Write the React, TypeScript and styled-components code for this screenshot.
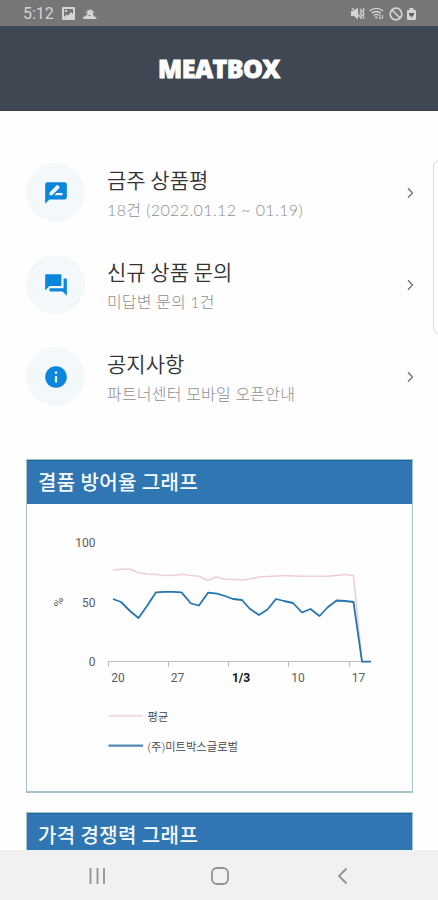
import React from 'react';
import styled, { createGlobalStyle } from 'styled-components';
import { MdInfo, MdQuestionAnswer, MdRateReview } from 'react-icons/md';

const GlobalStyle = createGlobalStyle`
  * { box-sizing: border-box; }
  html, body { margin: 0; padding: 0; background: #fff; }
  body { overflow: hidden; }
`;

const Screen = styled.div`
  position: relative;
  display: flex;
  flex-direction: column;
  width: 438px;
  height: 900px;
  overflow: hidden;
  background: #fefefe;
  font-family: Lato, 'Noto Sans CJK KR', sans-serif;
`;

const StatusBar = styled.header`
  flex: none;
  display: flex;
  align-items: center;
  justify-content: space-between;
  height: 26px;
  padding: 1px 22px 0 23px;
  background: #767676;
  color: #d4d4d4;
`;

const StatusGroup = styled.div<{ $gap: number }>`
  display: flex;
  align-items: center;
  gap: ${(p) => p.$gap}px;
`;

const Clock = styled.span`
  width: 31px;
  padding-top: 1px;
  font: 400 16px/20px Roboto, sans-serif;
  white-space: nowrap;
`;

const Brand = styled.div`
  flex: none;
  display: flex;
  align-items: center;
  justify-content: center;
  height: 85px;
  padding-bottom: 1px;
  border-bottom: 1px solid #37404a;
  background: #3f4852;
  color: #fff;
  font: 800 25px/30px 'Open Sans', sans-serif;
  letter-spacing: -0.55px;
  -webkit-text-stroke: 0.8px #fff;
`;

const Content = styled.main`
  flex: 1;
  min-height: 0;
  overflow: hidden;
  padding: 52px 25px 0 26px;
`;

const Menu = styled.nav`
  display: flex;
  flex-direction: column;
  gap: 33px;
`;

const MenuRow = styled.a`
  display: flex;
  align-items: center;
  height: 59px;
`;

const IconDisc = styled.span`
  flex: none;
  display: flex;
  align-items: center;
  justify-content: center;
  width: 59px;
  height: 59px;
  border-radius: 50%;
  background: #f3f8fb;
  color: #0a86dc;
  font-size: 26px;
`;

const MenuText = styled.span`
  flex: 1;
  display: flex;
  flex-direction: column;
  padding: 4px 0 0 22px;
`;

const MenuTitle = styled.span`
  font: 350 21px/30px 'Noto Sans CJK KR', sans-serif;
  color: #333;
  white-space: nowrap;
`;

const MenuNote = styled.span<{ $spacing: number }>`
  font: 300 16px/31px Lato, 'Noto Sans CJK KR', sans-serif;
  letter-spacing: ${(p) => p.$spacing}px;
  color: #8f8f8f;
  white-space: nowrap;
`;

const ArrowBox = styled.span`
  display: flex;
  width: 7px;
  height: 12px;
`;

const Card = styled.section<{ $top: number }>`
  margin-top: ${(p) => p.$top}px;
  border: 1px solid #a6c2cb;
  border-width: 1px 1.5px 2px;
  height: 334px;
`;

const CardTitle = styled.h2`
  height: 44px;
  margin: 0;
  padding-left: 11px;
  border-top: 1px solid #1767a3;
  background: #3076b2;
  color: #f5faff;
  font: 500 20px/41px 'Noto Sans CJK KR', sans-serif;
  letter-spacing: 0.4px;
`;

const NavBar = styled.footer`
  flex: none;
  display: flex;
  justify-content: space-between;
  align-items: center;
  height: 50px;
  padding: 1px 90px 0 88px;
  background: #f1f1f1;
`;

const EdgeHandle = styled.div`
  position: absolute;
  top: 160px;
  right: -8px;
  width: 13px;
  height: 174px;
  border: 1px solid #dadada;
  border-radius: 7px;
  background: #fff;
`;

const AxisText = styled.text<{ $bold?: boolean }>`
  font: ${(p) => (p.$bold ? 700 : 400)} 12px Roboto, sans-serif;
  fill: ${(p) => (p.$bold ? '#111' : '#5c5c5c')};
`;

const LegendText = styled.text`
  font: 350 11.3px Roboto, 'Noto Sans CJK KR', sans-serif;
  fill: #444;
`;

const rows = [
  { icon: <MdRateReview />, title: '금주 상품평', note: '18건 (2022.01.12 ~ 01.19)', spacing: 0.4 },
  { icon: <MdQuestionAnswer />, title: '신규 상품 문의', note: '미답변 문의 1건', spacing: 0.15 },
  { icon: <MdInfo />, title: '공지사항', note: '파트너센터 모바일 오픈안내', spacing: 0.2 },
];

const own =
  '113,599 121,602 130,611 138.5,618 147,606 156,592.3 164,591.8 173,591.8 181.5,592.3 191,603.5 199,605.5 208,592.7 217,593.7 225,596 233,599 242,600 250,609 259,615 267.5,609.5 276,599 284,601 293,603 302,612.5 310.5,609 319.5,616 328,607 336.5,600.5 345,601 353.5,602 362,661.7 371,661.7';
const average =
  '113,570 121,569.2 130,569.2 138,572.5 146,574 156,574.5 164,575.5 173,575.5 182,574.2 190,575.5 199,576.3 208,580.5 216,577 224,579 242,580 250,579 259,577 276,576 285,575.5 300,576.3 328,576.3 345,574.5 353.5,575.5 362,661';

const ticks = [108.5, 168.5, 228.5, 288.5, 349.5];
const xLabels = [
  { x: 118, text: '20' },
  { x: 177.5, text: '27' },
  { x: 241, text: '1/3', bold: true },
  { x: 298, text: '10' },
  { x: 358.5, text: '17' },
];

function Chart() {
  return (
    <svg width="384" height="287" viewBox="27 504 384 287" display="block">
      {[['100', 547], ['50', 606.5], ['0', 666]].map(([t, y]) => (
        <AxisText key={t} x="95.5" y={y} textAnchor="end">{t}</AxisText>
      ))}
      <AxisText x="59" y="606" textAnchor="middle" transform="rotate(-90 59 602)">%</AxisText>
      <path d={`M108 661.5H371 ${ticks.map((x) => `M${x} 662v5`).join(' ')}`} stroke="#bcbcbc" fill="none" />
      <polyline points={average} fill="none" stroke="#efcfd6" strokeWidth="1.6" strokeLinejoin="round" />
      <polyline points={own} fill="none" stroke="#2376b0" strokeWidth="1.8" strokeLinejoin="round" />
      {xLabels.map((l) => (
        <AxisText key={l.text} x={l.x} y="682" textAnchor="middle" $bold={l.bold}>{l.text}</AxisText>
      ))}
      <path d="M108.500 715.7H143" stroke="#f0dce1" strokeWidth="2" />
      <path d="M108.500 745.7H143" stroke="#5288b7" strokeWidth="2.2" />
      <LegendText x="147.5" y="720.5">평균</LegendText>
      <LegendText x="147.5" y="750.5">(주)미트박스글로벌</LegendText>
    </svg>
  );
}

export default function App() {
  return (
    <>
      <GlobalStyle />
      <Screen>
        <StatusBar>
          <StatusGroup $gap={8}>
            <Clock>5:12</Clock>
            <svg width="13" height="13" viewBox="0 0 13 13">
              <path fill="currentColor" fillRule="evenodd" d="M1 0h11a1 1 0 0 1 1 1v11a1 1 0 0 1-1 1H1a1 1 0 0 1-1-1V1a1 1 0 0 1 1-1zm1 2v8l2.500-2.500 1.500 1L9 5l2 2V2zM3 3h2v2H3z" />
            </svg>
            <svg width="14" height="12" viewBox="0 0 14 12">
              <path fill="currentColor" d="M4 5a3 3 0 0 1 6.200 0l-.5 2H4.500zM0 11a2 2 0 0 1 1.500-2.500 3 3 0 0 1 3-1.500l2 1 2.500-1.200a3 3 0 0 1 2.800 1.900A2 2 0 0 1 13.500 11z" />
              <path d="M2.500 5.500a4.600 4.600 0 0 1 9 0" stroke="currentColor" fill="none" strokeWidth=".8" strokeDasharray="1.500 1" />
            </svg>
          </StatusGroup>
          <StatusGroup $gap={4.5}>
            <svg width="14" height="13" viewBox="0 0 14 13">
              <path fill="currentColor" d="M0 4h3l4-3.500v12L3 9H0z" />
              <path d="M1 1l10 11M9 2l2 2-2 2 2 2-2 2M12 1l1 2-1 2 1 2-1 2 1 3" stroke="currentColor" fill="none" strokeWidth="1.2" />
            </svg>
            <svg width="15" height="13" viewBox="0 0 15 13" fill="none" stroke="currentColor" strokeWidth="1.3">
              <path d="M.7 4a9.300 9.300 0 0 1 13 0M2.800 6.300a6.300 6.300 0 0 1 8.800 0M4.800 8.500a3.500 3.500 0 0 1 4.800 0" />
              <path d="M5.500 9.500 7.200 12l1.600-2.500z" fill="currentColor" stroke="none" />
              <path d="M11 7v5M9.800 10.800 11 12l1.200-1.200M13.700 12V8" strokeWidth="1" />
            </svg>
            <svg width="14" height="14" viewBox="0 0 14 14" fill="none" stroke="currentColor" strokeWidth="1.7">
              <circle cx="7" cy="7" r="5.8" />
              <path d="m3 3 8 8" />
            </svg>
            <svg width="9" height="13" viewBox="0 0 9 13">
              <path fill="currentColor" d="M2.500 1h4v2H8a1 1 0 0 1 1 1v8a1 1 0 0 1-1 1H1a1 1 0 0 1-1-1V4a1 1 0 0 1 1-1h1.500z" />
              <path d="M2 6h5v1.500L4.500 10.500 2 7.500z" fill="#636363" />
            </svg>
          </StatusGroup>
        </StatusBar>
        <Brand>MEATBOX</Brand>
        <Content>
          <Menu>
            {rows.map((r) => (
              <MenuRow key={r.title}>
                <IconDisc>{r.icon}</IconDisc>
                <MenuText>
                  <MenuTitle>{r.title}</MenuTitle>
                  <MenuNote $spacing={r.spacing}>{r.note}</MenuNote>
                </MenuText>
                <ArrowBox>
                  <svg width="7" height="12" viewBox="0 0 7 12" fill="none" stroke="#777" strokeWidth="1.5">
                    <path d="M2 1.300 6.500 6 2 10.700" />
                  </svg>
                </ArrowBox>
              </MenuRow>
            ))}
          </Menu>
          <Card $top={53}>
            <CardTitle>결품 방어율 그래프</CardTitle>
            <Chart />
          </Card>
          <Card $top={19}>
            <CardTitle>가격 경쟁력 그래프</CardTitle>
          </Card>
        </Content>
        <NavBar>
          <svg width="18" height="18" viewBox="0 0 18 18">
            <path d="M2.500 1v16M9.500 1v16M16 1v16" stroke="#929292" strokeWidth="1.8" />
          </svg>
          <svg width="20" height="20" viewBox="0 0 20 20">
            <rect x="1" y="2" width="16" height="16" rx="5" fill="none" stroke="#929292" strokeWidth="1.8" />
          </svg>
          <svg width="12" height="18" viewBox="0 0 12 18">
            <path d="M10.500 1.500 3 9l7.500 7.500" fill="none" stroke="#929292" strokeWidth="1.8" />
          </svg>
        </NavBar>
        <EdgeHandle />
      </Screen>
    </>
  );
}
